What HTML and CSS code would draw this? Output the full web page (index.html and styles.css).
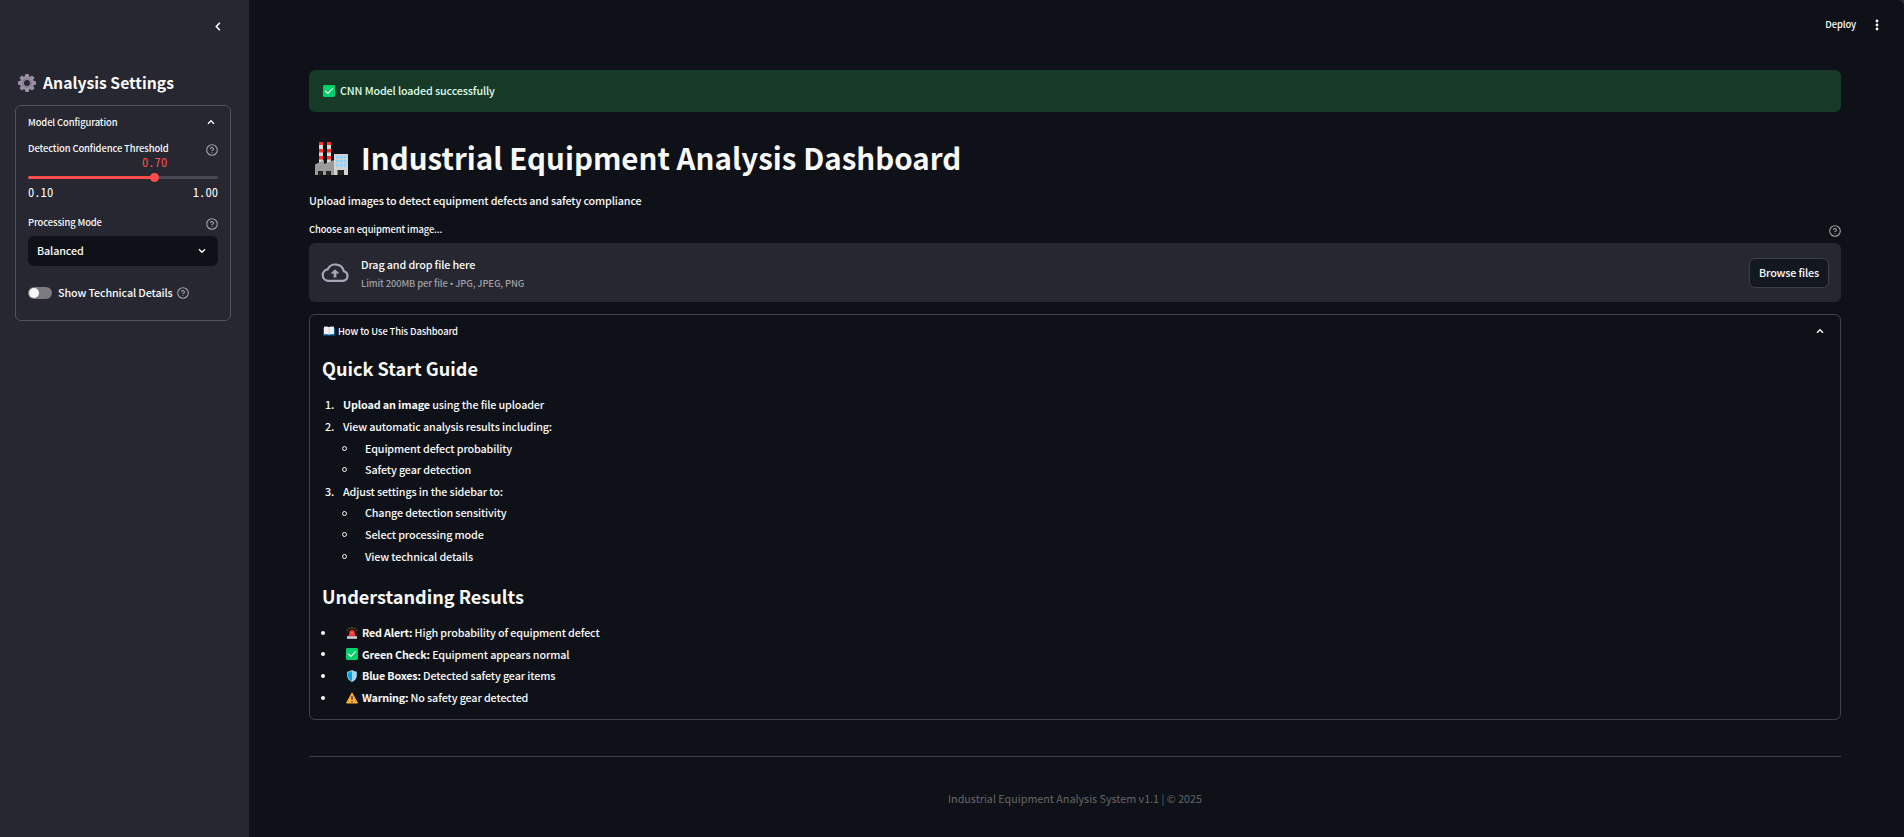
FILE: index.html
```
<!DOCTYPE html>
<html lang="en">
<head>
<meta charset="utf-8">
<title>Industrial Equipment Analysis Dashboard</title>
<link rel="stylesheet" href="styles.css">
</head>
<body>
<svg width="0" height="0" class="defs" aria-hidden="true">
  <symbol id="help" viewBox="0 0 24 24"><g fill="none" stroke="currentColor" stroke-width="2.2" stroke-linecap="round" stroke-linejoin="round"><circle cx="12" cy="12" r="10.6"/><path d="M9.1 9a3 3 0 0 1 5.8 1c0 2-3 3-3 3M12 17h.01"/></g></symbol>
  <symbol id="up" viewBox="0 0 8 6"><path d="M1 4.7 4 1.7l3 3" fill="none" stroke="currentColor" stroke-width="1.4"/></symbol>
  <symbol id="check" viewBox="0 0 12 12"><rect width="12" height="12" rx="1.4" fill="#00d26a"/><path d="M2.6 6.2 4.9 8.4 9.5 3.7" fill="none" stroke="#fff" stroke-width="1.2" stroke-linecap="round" stroke-linejoin="round"/></symbol>
</svg>
<div class="app">
  <aside class="sidebar">
    <div class="collapse"><svg width="6" height="9" viewBox="0 0 6 9"><path d="M4.9.8 1.3 4.5l3.6 3.700" fill="none" stroke="currentColor" stroke-width="1.6"/></svg></div>
    <h2 class="side-title">
      <svg width="18" height="18" viewBox="0 0 18 18"><g fill="#9b8fa3"><rect x="7" width="4" height="4.500" rx="1"/><rect x="7" width="4" height="4.500" rx="1" transform="rotate(45 9 9)"/><rect x="7" width="4" height="4.500" rx="1" transform="rotate(90 9 9)"/><rect x="7" width="4" height="4.500" rx="1" transform="rotate(135 9 9)"/><rect x="7" width="4" height="4.500" rx="1" transform="rotate(180 9 9)"/><rect x="7" width="4" height="4.500" rx="1" transform="rotate(225 9 9)"/><rect x="7" width="4" height="4.500" rx="1" transform="rotate(270 9 9)"/><rect x="7" width="4" height="4.500" rx="1" transform="rotate(315 9 9)"/></g><circle cx="9" cy="9" r="5" fill="none" stroke="#9b8fa3" stroke-width="4"/><circle cx="9" cy="9" r="4.300" fill="none" stroke="#7d7189" stroke-width="1"/></svg>
      <span>Analysis Settings</span>
    </h2>
    <section class="config">
      <div class="config-head small"><span>Model Configuration</span><svg class="chev" width="8" height="6"><use href="#up"/></svg></div>
      <div class="label-row small"><span>Detection Confidence Threshold</span><svg class="help" width="12" height="12"><use href="#help"/></svg></div>
      <div class="slider">
        <div class="value mono">0.70</div>
        <div class="track"><div class="thumb"></div></div>
        <div class="range mono"><span>0.10</span><span>1.00</span></div>
      </div>
      <div class="label-row small"><span>Processing Mode</span><svg class="help" width="12" height="12"><use href="#help"/></svg></div>
      <div class="select"><span>Balanced</span><svg width="8" height="6" viewBox="0 0 8 6"><path d="M1 1.200l3 3 3-3" fill="none" stroke="currentColor" stroke-width="1.4"/></svg></div>
      <div class="toggle-row"><div class="toggle"><i></i></div><span>Show Technical Details</span><svg class="help" width="12" height="12"><use href="#help"/></svg></div>
    </section>
  </aside>
  <main class="main">
    <header class="top small"><span>Deploy</span><svg width="4" height="12" viewBox="0 0 4 12" fill="currentColor"><circle cx="2" cy="2" r="1.4"/><circle cx="2" cy="6" r="1.4"/><circle cx="2" cy="10" r="1.4"/></svg></header>
    <div class="content">
      <div class="alert"><svg width="12" height="12"><use href="#check"/></svg><span>CNN Model loaded successfully</span></div>
      <h1 class="title">
        <svg width="33" height="33" viewBox="0 0 33 33"><path d="M4 0h4v22H4zM12 0h4v22h-4z" fill="#d9d9d9"/><path d="M4 0h4v3H4zM4 7h4v3.500H4zM4 14h4v3.500H4zM12 0h4v3h-4zM12 7h4v3.500h-4zM12 14h4v3.500h-4z" fill="#f8312f"/><path d="M0 33V22.500l9-4.500v4l10-4v15z" fill="#9b9b9b"/><path d="M19 12h14v21H19z" fill="#d3d3d3"/><path d="M3 29h5v4H3zM11 29h5v4h-5zM22.500 28H29v5h-6.500z" fill="#212121"/><path d="M21 14h3v2.500h-3zM25 14h3v2.500h-3zM29 14h2.500v2.500H29zM21 18h3v2.500h-3zM25 18h3v2.500h-3zM29 18h2.500v2.500H29zM21 22h3v2.500h-3zM25 22h3v2.500h-3zM29 22h2.500v2.500H29z" fill="#8fd0ff"/></svg>
        <span>Industrial Equipment Analysis Dashboard</span>
      </h1>
      <p class="intro">Upload images to detect equipment defects and safety compliance</p>
      <div class="label-row file small"><span>Choose an equipment image...</span><svg class="help" width="12" height="12"><use href="#help"/></svg></div>
      <div class="uploader">
        <svg class="cloud" width="28" height="20" viewBox="0 0 28 20"><path d="M7 17.900h15a4.900 4.900 0 0 0 .9-9.600A8.700 8.700 0 0 0 6.600 6.400 5.800 5.800 0 0 0 7 17.900z" fill="none" stroke="#a3a8b8" stroke-width="2.200"/><path d="M14 6.200 18.500 10.600H15.400V14.500H12.600V10.600H9.500z" fill="#a3a8b8"/></svg>
        <div class="drop"><div>Drag and drop file here</div><div class="limit">Limit 200MB per file <span class="dot">•</span> JPG, JPEG, PNG</div></div>
        <button class="browse">Browse files</button>
      </div>
      <section class="guide">
        <div class="guide-head small"><svg width="12" height="10" viewBox="0 0 12 10"><path d="M.3 2h11.400v7.500H.3z" fill="#0074ba"/><path d="M1 .8Q3.800 0 6 1 8.200 0 11 .8V8.200Q8.200 7.500 6 8.500 3.800 7.500 1 8.200z" fill="#f3eef8"/><path d="M6 1v7.500" stroke="#cdc4d6" stroke-width=".8"/></svg><span>How to Use This Dashboard</span><svg class="chev" width="8" height="6"><use href="#up"/></svg></div>
        <h3>Quick Start Guide</h3>
        <ol class="steps">
          <li><span class="num">1.</span><span><b>Upload an image</b> using the file uploader</span></li>
          <li><span class="num">2.</span><span>View automatic analysis results including:</span></li>
          <li class="sub"><i></i><span>Equipment defect probability</span></li>
          <li class="sub"><i></i><span>Safety gear detection</span></li>
          <li><span class="num">3.</span><span>Adjust settings in the sidebar to:</span></li>
          <li class="sub"><i></i><span>Change detection sensitivity</span></li>
          <li class="sub"><i></i><span>Select processing mode</span></li>
          <li class="sub"><i></i><span>View technical details</span></li>
        </ol>
        <h3 class="second">Understanding Results</h3>
        <ul class="results">
          <li><i></i><svg width="12" height="12" viewBox="0 0 12 12"><path d="M2.500 9.300 3.500 4.200Q6 1.800 8.500 4.200L9.500 9.300z" fill="#f8312f"/><path d="M1 9.200h10v2.600H1z" fill="#d3cdd6"/><path d="M6 .1v1.700M2.700.9l.9 1.300M9.300.9l-.9 1.300M.8 3l1.300.6M11.200 3l-1.300.6" stroke="#e5a52c" stroke-width=".8"/><path d="M5.500 5h1v2.500h-1z" fill="#ff9b92"/></svg><span><b>Red Alert:</b> High probability of equipment defect</span></li>
          <li><i></i><svg width="12" height="12"><use href="#check"/></svg><span><b>Green Check:</b> Equipment appears normal</span></li>
          <li><i></i><svg width="12" height="12" viewBox="0 0 12 12"><path d="M6 0Q8.500 1.800 10.800 1.800V6Q10.500 9.800 6 12 1.500 9.800 1.200 6V1.800Q3.500 1.800 6 0z" fill="#b4dcf5"/><path d="M6 .8Q4.300 2.300 2 2.400V6Q2.300 9.500 6 11.200z" fill="#00a6ed"/><path d="M6 .8Q7.700 2.300 10 2.400V6Q9.700 9.500 6 11.200z" fill="#9bd4fb"/></svg><span><b>Blue Boxes:</b> Detected safety gear items</span></li>
          <li><i></i><svg width="12" height="12" viewBox="0 0 12 12"><path d="M6 1 11.400 11H.6z" fill="#ffb02e" stroke="#ffb02e" stroke-width="1" stroke-linejoin="round"/><path d="M6 4.200v3.600M6 9v1.300" stroke="#321b41" stroke-width="1.200"/></svg><span><b>Warning:</b> No safety gear detected</span></li>
        </ul>
      </section>
      <footer>Industrial Equipment Analysis System v1.1 | © 2025</footer>
    </div>
  </main>
</div>
</body>
</html>
```

FILE: styles.css
```
* { box-sizing: border-box; }
html { background: #2b2c30; }
body {
  margin: 0;
  height: 837px;
  overflow: hidden;
  color: #fafafa;
  font-family: "Noto Sans CJK SC", "Noto Sans", sans-serif;
  font-size: 10.75px;
  font-weight: 500;
  letter-spacing: -0.125px;
  line-height: 18px;
}
h1, h2, h3, p, ol, ul { margin: 0; padding: 0; }
li { list-style: none; }
svg { display: block; flex: none; }
.defs { position: absolute; }
.small { font-size: 9.4px; letter-spacing: -0.1px; }
.mono { font-family: "Noto Sans Mono CJK SC", "Liberation Mono", monospace; font-size: 12.6px; letter-spacing: 0; font-weight: 400; line-height: 14px; }
.help { color: #a3a3a7; }

.app { display: flex; height: 837px; border-radius: 3px 6px 0 0; overflow: hidden; background: #0e1117; }

.sidebar { width: 249px; flex: none; background: #262730; padding: 0 18px 0 15px; }
.collapse { display: flex; justify-content: flex-end; padding: 22px 10px 0 0; height: 69px; }
.side-title { display: flex; align-items: center; gap: 7px; height: 28px; padding-left: 3px; font-size: 15.72px; font-weight: 700; letter-spacing: 0; line-height: 28px; }
.config { height: 216px; margin-top: 8px; padding: 0 12px; border: 1px solid #51525a; border-radius: 6px; }
.config-head { display: flex; align-items: center; justify-content: space-between; height: 32px; padding-right: 3px; }
.label-row { display: flex; align-items: center; justify-content: space-between; height: 18px; }
.label-row .help { position: relative; top: 2px; }
.config .label-row { margin-top: 1px; }
.slider { height: 55px; }
.value { color: #ff4b4b; padding-left: 114px; height: 19px; line-height: 10px; }
.track { height: 3px; border-radius: 2px; background: linear-gradient(90deg, #ff4b4b 66.67%, #474852 66.67%); display: flex; align-items: center; padding-left: 122px; }
.thumb { width: 9px; height: 9px; border-radius: 50%; background: #ff4b4b; }
.range { display: flex; justify-content: space-between; padding-top: 6px; }
.select { height: 30px; margin-top: 5px; padding: 0 12px 0 9px; border-radius: 6px; background: #0e1117; display: flex; align-items: center; justify-content: space-between; }
.toggle-row { display: flex; align-items: center; height: 18px; margin-top: 18px; }
.toggle { width: 24px; height: 12px; border-radius: 6px; background: #7a7a80; padding: 1px; margin-right: 6px; }
.toggle i { display: block; width: 10px; height: 10px; border-radius: 50%; background: #fafafa; }
.toggle-row .help { margin-left: 4px; }

.main { flex: 1; min-width: 0; }
.top { display: flex; justify-content: flex-end; align-items: center; gap: 19px; height: 49px; padding-right: 25px; }
.top span { height: 20px; }
.content { padding: 21px 63px 0 60px; }
.alert { display: flex; align-items: center; gap: 5px; height: 42px; padding-left: 14px; border-radius: 6px; background: #173928; color: #dffde9; }
.title { display: flex; align-items: center; gap: 13px; height: 40px; margin-top: 26px; padding-left: 6px; font-size: 29.5px; letter-spacing: 0.02px; line-height: 38px; font-weight: 700; }
.title span { height: 40px; }
.intro { margin-top: 14px; height: 18px; line-height: 18px; }
.file { margin-top: 10px; }
.uploader { display: flex; align-items: center; height: 59px; margin-top: 5px; padding: 0 12px; border-radius: 6px; background: #262730; }
.drop { flex: 1; margin-left: 12px; padding-top: 4px; }
.limit { font-size: 9.4px; letter-spacing: -0.1px; color: #a1a1a5; }
.dot { font-family: "Noto Sans", sans-serif; }
.browse { width: 80px; height: 30px; padding: 0; border: 1px solid #3f4148; border-radius: 6px; background: #131720; color: #fafafa; font: inherit; letter-spacing: -0.16px; }

.guide { height: 406px; margin-top: 12px; padding: 0 12px; border: 1px solid #404247; border-radius: 6px; }
.guide-head { display: flex; align-items: center; height: 32px; padding: 0 4px 0 1px; }
.guide-head span { flex: 1; margin-left: 3px; }
h3 { font-size: 18.1px; font-weight: 700; letter-spacing: 0; line-height: 24px; height: 24px; margin-top: 9px; }
.steps { margin-top: 14.4px; }
.steps li, .results li { display: flex; align-items: center; height: 21.6px; line-height: 21.6px; }
.num { width: 18px; padding-left: 3px; margin-right: 3px; }
.steps .sub { padding-left: 20px; }
.sub i { width: 5px; height: 5px; border: 1px solid #fafafa; border-radius: 50%; margin-right: 18px; }
.second { margin-top: 16.6px; }
.results { margin-top: 14.3px; }
.results i { width: 4px; height: 4px; border-radius: 50%; background: #fafafa; margin: 0 21px 0 -1px; }
.results svg { margin-right: 4px; }
.results b { letter-spacing: -0.18px; }

footer { margin-top: 36px; border-top: 1px solid #3e4045; padding-top: 33px; text-align: center; font-size: 10.75px; font-weight: 400; letter-spacing: 0; color: #666; }
```
